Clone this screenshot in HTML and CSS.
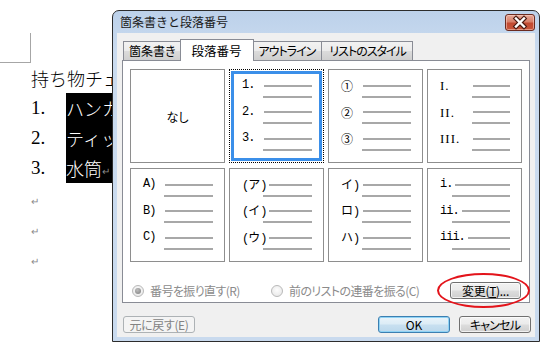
FILE: index.html
```html
<!DOCTYPE html>
<html lang="ja">
<head>
<meta charset="utf-8">
<title>箇条書きと段落番号</title>
<link rel="stylesheet" href="styles.css">
</head>
<body>
<div class="doc">
  <div class="corner"></div>
  <p class="para">持ち物チェック</p>
  <p class="para"><span class="num">1.</span><span class="sel">ハンカチ</span></p>
  <p class="para"><span class="num">2.</span><span class="sel">ティッシュ</span></p>
  <p class="para"><span class="num">3.</span><span class="sel">水筒<span class="ret">↵</span></span></p>
  <p class="para"><span class="ret">↵</span></p>
  <p class="para"><span class="ret">↵</span></p>
  <p class="para"><span class="ret">↵</span></p>
</div>

<div class="dialog">
  <div class="titlebar">
    <span class="title">箇条書きと段落番号</span>
    <span class="close">
      <svg width="30" height="17" viewBox="0 0 30 17">
        <path d="M11 4.5 L19 12.5 M19 4.5 L11 12.5" stroke="#4a1a12" stroke-width="4.6" stroke-linecap="square" fill="none"/>
        <path d="M11 4.5 L19 12.5 M19 4.5 L11 12.5" stroke="#ffffff" stroke-width="2.4" stroke-linecap="square" fill="none"/>
      </svg>
    </span>
  </div>
  <div class="client">
    <div class="tabs">
      <span class="tab">箇条書き</span>
      <span class="tab active">段落番号</span>
      <span class="tab kana">アウトライン</span>
      <span class="tab kana">リストのスタイル</span>
    </div>
    <div class="panel">
      <div class="grid">
        <div class="opt none">なし</div>

        <div class="opt selected ind34">
          <div class="it"><div class="r1"><span class="lab mono">1.</span><span class="ln"></span></div><div class="r2"><span class="ln"></span></div></div>
          <div class="it"><div class="r1"><span class="lab mono">2.</span><span class="ln"></span></div><div class="r2"><span class="ln"></span></div></div>
          <div class="it"><div class="r1"><span class="lab mono">3.</span><span class="ln"></span></div><div class="r2"><span class="ln"></span></div></div>
        </div>

        <div class="opt ind34">
          <div class="it"><div class="r1"><span class="lab circ">①</span><span class="ln"></span></div><div class="r2"><span class="ln"></span></div></div>
          <div class="it"><div class="r1"><span class="lab circ">②</span><span class="ln"></span></div><div class="r2"><span class="ln"></span></div></div>
          <div class="it"><div class="r1"><span class="lab circ">③</span><span class="ln"></span></div><div class="r2"><span class="ln"></span></div></div>
        </div>

        <div class="opt ind45">
          <div class="it"><div class="r1"><span class="lab serif">I.</span><span class="ln"></span></div><div class="r2"><span class="ln"></span></div></div>
          <div class="it"><div class="r1"><span class="lab serif">II.</span><span class="ln"></span></div><div class="r2"><span class="ln"></span></div></div>
          <div class="it"><div class="r1"><span class="lab serif">III.</span><span class="ln"></span></div><div class="r2"><span class="ln"></span></div></div>
        </div>

        <div class="opt ind34">
          <div class="it"><div class="r1"><span class="lab mono">A)</span><span class="ln"></span></div><div class="r2"><span class="ln"></span></div></div>
          <div class="it"><div class="r1"><span class="lab mono">B)</span><span class="ln"></span></div><div class="r2"><span class="ln"></span></div></div>
          <div class="it"><div class="r1"><span class="lab mono">C)</span><span class="ln"></span></div><div class="r2"><span class="ln"></span></div></div>
        </div>

        <div class="opt ind34">
          <div class="it"><div class="r1"><span class="lab"><span class="mono">(</span>ア<span class="mono">)</span></span><span class="ln"></span></div><div class="r2"><span class="ln"></span></div></div>
          <div class="it"><div class="r1"><span class="lab"><span class="mono">(</span>イ<span class="mono">)</span></span><span class="ln"></span></div><div class="r2"><span class="ln"></span></div></div>
          <div class="it"><div class="r1"><span class="lab"><span class="mono">(</span>ウ<span class="mono">)</span></span><span class="ln"></span></div><div class="r2"><span class="ln"></span></div></div>
        </div>

        <div class="opt ind34">
          <div class="it"><div class="r1"><span class="lab">イ<span class="mono">)</span></span><span class="ln"></span></div><div class="r2"><span class="ln"></span></div></div>
          <div class="it"><div class="r1"><span class="lab">ロ<span class="mono">)</span></span><span class="ln"></span></div><div class="r2"><span class="ln"></span></div></div>
          <div class="it"><div class="r1"><span class="lab">ハ<span class="mono">)</span></span><span class="ln"></span></div><div class="r2"><span class="ln"></span></div></div>
        </div>

        <div class="opt ind25">
          <div class="it"><div class="r1"><span class="lab mono">i.</span><span class="ln"></span></div><div class="r2"><span class="ln"></span></div></div>
          <div class="it"><div class="r1"><span class="lab mono">ii.</span><span class="ln"></span></div><div class="r2"><span class="ln"></span></div></div>
          <div class="it"><div class="r1"><span class="lab mono">iii.</span><span class="ln"></span></div><div class="r2"><span class="ln"></span></div></div>
        </div>
      </div>

      <div class="options">
        <label class="radio"><span class="dot checked"></span><span class="rtext">番号を振り直す(R)</span></label>
        <label class="radio"><span class="dot"></span><span class="rtext">前のリストの連番を振る(C)</span></label>
        <span class="btn change">変更(<u>T</u>)...</span>
      </div>
    </div>
    <div class="footer">
      <span class="btn disabled">元に戻す(E)</span>
      <span class="btn default">OK</span>
      <span class="btn kana">キャンセル</span>
    </div>
  </div>
</div>

<div class="annot"></div>
</body>
</html>
```

FILE: styles.css
```css
* { box-sizing: border-box; }

html, body {
  margin: 0;
  padding: 0;
}

body {
  width: 551px;
  height: 353px;
  overflow: hidden;
  position: relative;
  background: #ffffff;
  font-family: "Noto Sans CJK JP", "Noto Sans", sans-serif;
  color: #000;
}

/* ---------- document ---------- */
.doc {
  padding-top: 33px;
}

.corner {
  width: 31px;
  height: 30px;
  border-right: 1px solid #a6a6a6;
  border-bottom: 1px solid #a6a6a6;
}

.para {
  margin: 0;
  padding-left: 31px;
  height: 30px;
  line-height: 30px;
  font-size: 18px;
  font-weight: 300;
  white-space: nowrap;
  display: flex;
  align-items: center;
}

.num {
  width: 35px;
  font-family: "Liberation Serif", serif;
  font-size: 19px;
}

.sel {
  background: #000;
  color: #fff;
  height: 30px;
  line-height: 30px;
  display: flex;
  align-items: center;
}

.ret {
  font-family: "DejaVu Sans", sans-serif;
  font-size: 10px;
  color: #8a8a8a;
  line-height: 10px;
  padding-top: 8px;
}

.sel .ret {
  padding-right: 2px;
}

/* ---------- dialog window ---------- */
.dialog {
  position: absolute;
  left: 112px;
  top: 10px;
  width: 428px;
  height: 332px;
  border: 1px solid #2c2c2c;
  border-radius: 7px 7px 0 0;
  background: linear-gradient(#bcd1ea, #cadbef 40px, #c9daee);
  padding: 0 4px 4px 4px;
  display: flex;
  flex-direction: column;
  font-size: 12px;
  font-feature-settings: "palt";
}

.titlebar {
  height: 22px;
  display: flex;
  justify-content: space-between;
  align-items: flex-start;
}

.title {
  padding-left: 3px;
  line-height: 22px;
  font-size: 12px;
  color: #1a1a1a;
  font-feature-settings: normal;
}

.close {
  margin-top: 3px;
  width: 30px;
  height: 17px;
  border: 1px solid #6b2b20;
  border-radius: 3px;
  background: linear-gradient(#e6a898, #d8806a 45%, #c24a32 55%, #c8563b);
  display: flex;
  box-shadow: inset 0 0 0 1px rgba(255, 220, 210, 0.5);
}

.close svg {
  display: block;
  margin: -1px;
}

.client {
  flex: 1;
  background: #f0f0f0;
  padding: 7px 5px 4px 5px;
  display: flex;
  flex-direction: column;
}

/* ---------- tabs ---------- */
.tabs {
  height: 20px;
  display: flex;
  align-items: flex-end;
  padding-left: 1px;
}

.tab {
  height: 19px;
  line-height: 18px;
  padding: 0 5px;
  border: 1px solid #898c95;
  border-bottom: none;
  border-left-width: 0;
  background: linear-gradient(#f2f2f2, #ebebeb 50%, #dcdcdc 50%, #cfcfcf);
  white-space: nowrap;
  color: #000;
}

.tab:first-child {
  border-left-width: 1px;
}

.tab.kana {
  letter-spacing: -1px;
  padding: 0 6px 0 7px;
}

.tab.active {
  height: 22px;
  margin: 0 -2px -1px -2px;
  padding: 0 11px;
  line-height: 22px;
  background: #ffffff;
  border-left-width: 1px;
  position: relative;
  z-index: 1;
  font-size: 12.5px;
}

.tab.active + .tab {
  border-left-width: 0;
}

/* ---------- panel ---------- */
.panel {
  height: 243px;
  border: 1px solid #898c95;
  background: #ffffff;
  padding: 8px 7px 3px 7px;
  display: flex;
  flex-direction: column;
}

.grid {
  display: grid;
  grid-template-columns: repeat(4, 95px);
  grid-auto-rows: 94px;
  gap: 5px 4px;
}

.opt {
  border: 1px solid #8e8e8e;
  background: #fff;
  padding-top: 10px;
}

.opt.none {
  padding-top: 0;
  display: flex;
  align-items: center;
  justify-content: center;
  font-size: 12px;
}

.opt.selected {
  border: 1px dotted #000;
  box-shadow: inset 0 0 0 1px #fff, inset 0 0 0 4px #3b8fe9;
}

.it {
  margin-bottom: 4.5px;
}

.r1, .r2 {
  height: 11px;
  display: flex;
  align-items: center;
  padding-right: 11px;
}

.r1 {
  padding-left: 12px;
}

.lab {
  font-size: 12px;
  line-height: 11px;
  margin-right: 3px;
  white-space: nowrap;
  font-feature-settings: normal;
}

.mono {
  font-family: "Liberation Mono", monospace;
  letter-spacing: -1px;
}

.serif {
  font-family: "Liberation Serif", serif;
  font-size: 13px;
  letter-spacing: 1px;
}

.circ {
  font-size: 12px;
}

.ln {
  flex: 1;
  height: 2px;
  background: #a8a8a8;
}

.ind34 .lab { min-width: 19px; }
.ind34 .r2 { padding-left: 33px; }
.ind45 .lab { min-width: 30px; }
.ind45 .r2 { padding-left: 44px; }
.ind25 .lab { min-width: 10px; }
.ind25 .r2 { padding-left: 24px; }

/* ---------- options row ---------- */
.options {
  margin-top: 20px;
  height: 17px;
  display: grid;
  grid-template-columns: 139px 1fr auto;
  align-items: center;
  padding-left: 2px;
  padding-right: 1px;
}

.radio {
  display: flex;
  align-items: center;
  gap: 6px;
  white-space: nowrap;
}

.dot {
  width: 12px;
  height: 12px;
  border-radius: 50%;
  border: 1px solid #b9b9b9;
  background: radial-gradient(circle at 50% 40%, #fdfdfd, #e4e4e4);
  display: flex;
  align-items: center;
  justify-content: center;
}

.dot.checked::after {
  content: "";
  width: 6px;
  height: 6px;
  border-radius: 50%;
  background: radial-gradient(circle at 40% 35%, #bdbdbd, #7d7d7d);
}

.rtext {
  color: #8b8b8b;
  font-size: 12px;
  line-height: 17px;
  letter-spacing: -0.6px;
}

/* ---------- buttons ---------- */
.btn {
  width: 72px;
  height: 17px;
  border: 1px solid #707070;
  border-radius: 3px;
  background: linear-gradient(#f2f2f2, #ebebeb 48%, #dddddd 52%, #cfcfcf);
  box-shadow: inset 0 0 0 1px rgba(255, 255, 255, 0.7);
  display: flex;
  align-items: center;
  justify-content: center;
  font-size: 12px;
  line-height: 15px;
  white-space: nowrap;
  color: #000;
}

.btn.kana {
  letter-spacing: -0.8px;
}

.btn.change {
  width: 71px;
  letter-spacing: -0.3px;
}

.btn u {
  text-decoration: underline;
  text-underline-offset: 1px;
}

.footer {
  margin-top: 13px;
  height: 17px;
  display: flex;
  gap: 9px;
  padding-left: 1px;
  margin-right: -1px;
}

.btn.disabled {
  margin-right: auto;
  border-color: #adb2b5;
  background: #f4f4f4;
  color: #838383;
  box-shadow: none;
  letter-spacing: -0.4px;
}

.btn.default {
  border-color: #3c7fb1;
  background: linear-gradient(#eaf4fa, #dcecf6 48%, #c8e0f0 52%, #bcd8ec);
  box-shadow: inset 0 0 0 1px #8fd3f5;
}

/* ---------- annotation ---------- */
.annot {
  position: absolute;
  left: 437px;
  top: 273px;
  width: 93px;
  height: 35px;
  border: 2px solid #e3141b;
  border-radius: 50%;
}
```
